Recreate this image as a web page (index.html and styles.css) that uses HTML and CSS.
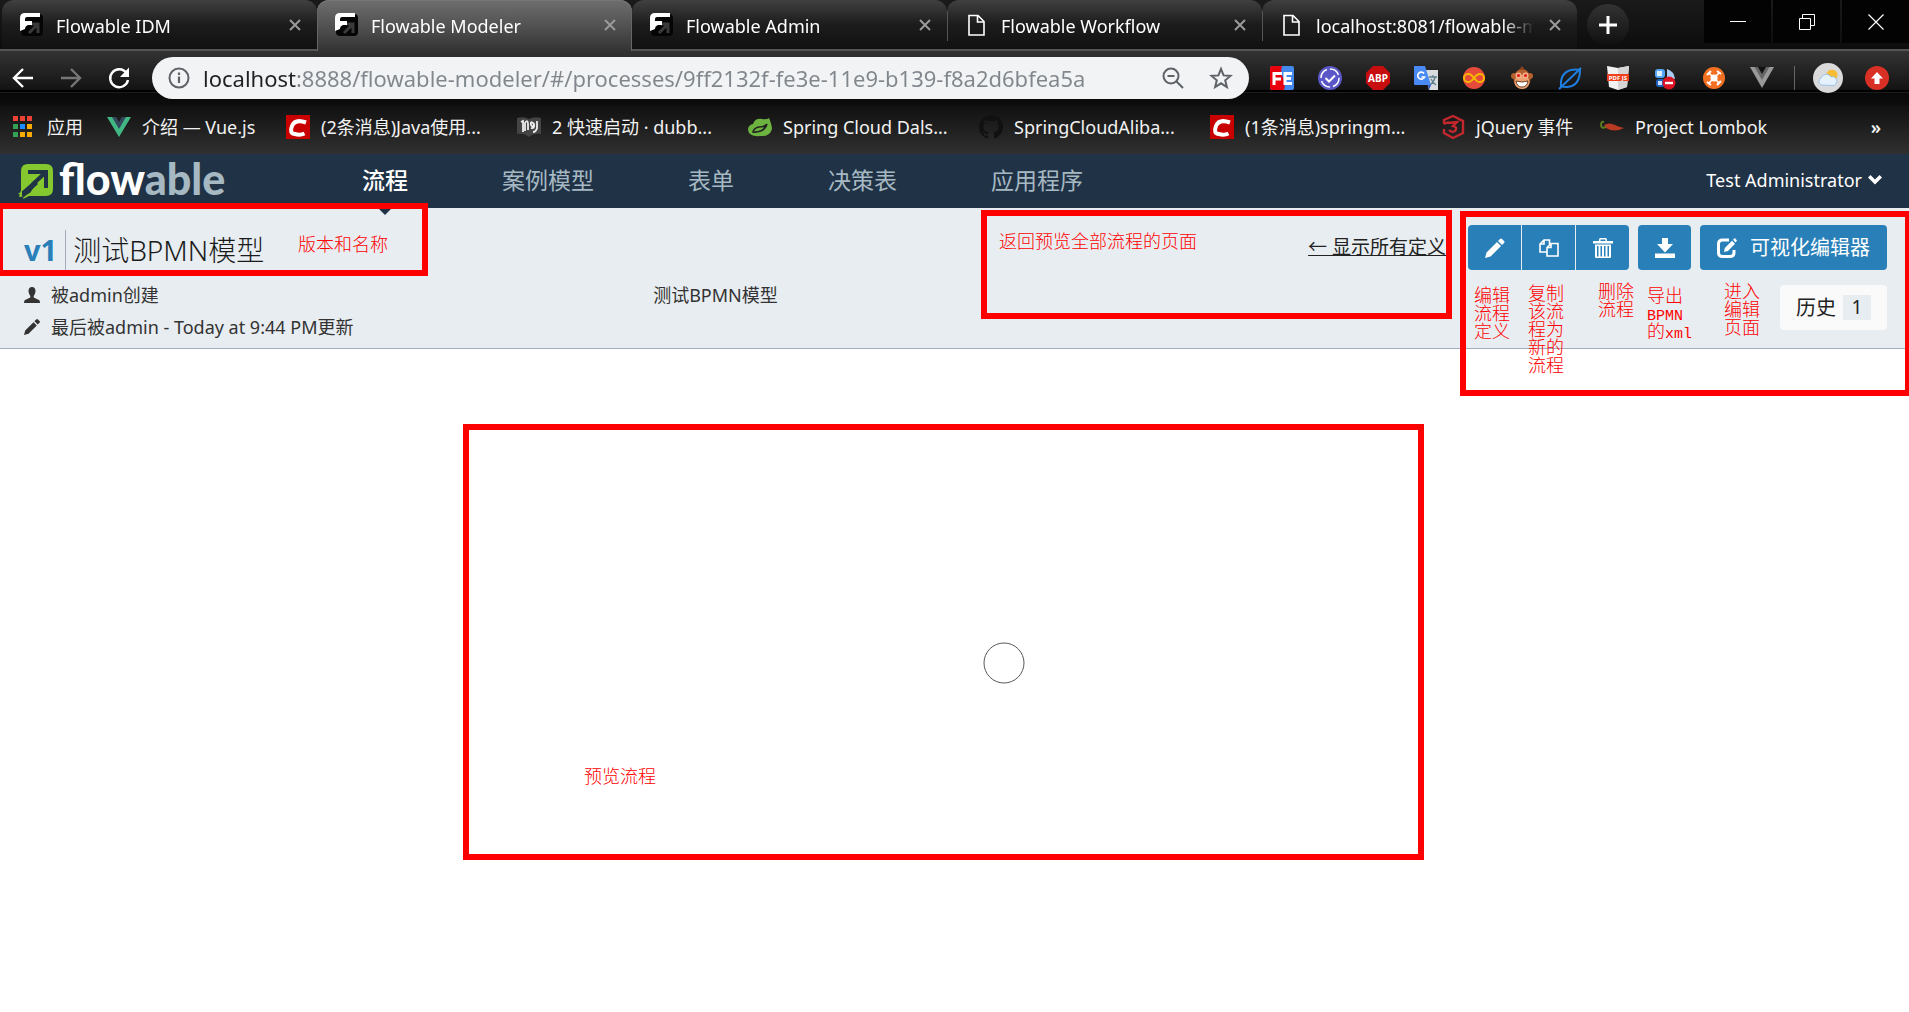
FILE: index.html
```html
<!DOCTYPE html>
<html lang="zh-CN">
<head>
<meta charset="utf-8">
<meta name="viewport" content="width=device-width, initial-scale=1">
<title>Flowable Modeler</title>
<link rel="stylesheet" href="styles.css">
</head>
<body>
<svg class="sprite" aria-hidden="true">
  <symbol id="i-favicon" viewBox="0 0 24 24"><rect x="1" y="1" width="22" height="22" rx="4" fill="#050505"/><path d="M9 20 17 12M11 11h7v9" fill="none" stroke="#3a3a3a" stroke-width="3"/><path d="M0 18V5q0-5 5-5h15v4H7q-2 0-2 2v2h7v4H8Q5 13 5 16z" fill="#fff"/></symbol>
  <symbol id="i-close" viewBox="0 0 14 14"><path d="M2 2l10 10M12 2 2 12" stroke="#9a9a9a" stroke-width="2"/></symbol>
  <symbol id="i-file" viewBox="0 0 24 24"><path d="M4 2.500h9l6 6V22H4zM12.500 3v6H19" fill="none" stroke="#fff" stroke-width="1.600"/></symbol>
  <symbol id="i-csdn" viewBox="0 0 24 24"><path d="M0 0h24v24H0z" fill="#c90000"/><path d="M20 7.500Q9 3.500 6 11t3 8q5 1.500 9.500-.5" fill="none" stroke="#fff" stroke-width="4"/></symbol>
</svg>

<header class="chrome">
  <div class="tabstrip">
    <div class="tab">
      <svg class="tab__icon"><use href="#i-favicon"/></svg><span class="tab__title">Flowable IDM</span>
      <button class="tab__close" aria-label="关闭"><svg><use href="#i-close"/></svg></button>
    </div>
    <div class="tab tab--active">
      <svg class="tab__icon"><use href="#i-favicon"/></svg><span class="tab__title">Flowable Modeler</span>
      <button class="tab__close" aria-label="关闭"><svg><use href="#i-close"/></svg></button>
    </div>
    <div class="tab">
      <svg class="tab__icon"><use href="#i-favicon"/></svg><span class="tab__title">Flowable Admin</span>
      <button class="tab__close" aria-label="关闭"><svg><use href="#i-close"/></svg></button>
    </div>
    <div class="tab tab--divided">
      <svg class="tab__icon"><use href="#i-file"/></svg><span class="tab__title">Flowable Workflow</span>
      <button class="tab__close" aria-label="关闭"><svg><use href="#i-close"/></svg></button>
    </div>
    <div class="tab tab--divided">
      <svg class="tab__icon"><use href="#i-file"/></svg><span class="tab__title">localhost:8081/flowable-modeler</span>
      <button class="tab__close" aria-label="关闭"><svg><use href="#i-close"/></svg></button>
    </div>
    <button class="newtab" aria-label="新标签页"><svg viewBox="0 0 18 18"><path d="M9 0v18M0 9h18" stroke="#fff" stroke-width="3"/></svg></button>
    <div class="winbuttons">
      <button aria-label="最小化"><svg viewBox="0 0 16 16"><path d="M0 7.500h16" stroke="#fff"/></svg></button>
      <button aria-label="还原"><svg viewBox="0 0 16 16"><path d="M.5 4.500h11v11H.5zM3.500 4.500v-4h12v11h-4" fill="none" stroke="#fff"/></svg></button>
      <button aria-label="关闭窗口"><svg viewBox="0 0 16 16"><path d="M.5.5l15 15M15.500.5l-15 15" stroke="#fff" stroke-width="1.200"/></svg></button>
    </div>
  </div>

  <div class="toolbar">
    <div class="toolbar__nav">
      <button aria-label="后退"><svg viewBox="0 0 24 24"><path d="M22 12H4M12 3l-9 9 9 9" fill="none" stroke="#fff" stroke-width="2.400"/></svg></button>
      <button aria-label="前进"><svg viewBox="0 0 24 24"><path d="M2 12h18M12 3l9 9-9 9" fill="none" stroke="#777" stroke-width="2.400"/></svg></button>
      <button aria-label="重新加载"><svg viewBox="0 0 24 24"><path d="M19.500 7A9 9 0 1 0 21 14" fill="none" stroke="#fff" stroke-width="2.400"/><path d="M22 1.500V11h-9z" fill="#fff"/></svg></button>
    </div>
    <div class="omnibox">
      <svg viewBox="0 0 24 24" class="omnibox__icon"><circle cx="12" cy="12" r="9.500" fill="none" stroke="#5f6368" stroke-width="2"/><path d="M12 10.500V17M12 6.500V9" stroke="#5f6368" stroke-width="2.200"/></svg>
      <input class="omnibox__url" type="text" aria-label="地址" value="localhost:8888/flowable-modeler/#/processes/9ff2132f-fe3e-11e9-b139-f8a2d6bfea5a">
      <button aria-label="缩放"><svg viewBox="0 0 24 24"><circle cx="10" cy="10" r="7.500" fill="none" stroke="#5f6368" stroke-width="2"/><path d="M15 15l7 7M6.500 10h7" stroke="#5f6368" stroke-width="2"/></svg></button>
      <button aria-label="收藏"><svg viewBox="0 0 24 24"><path d="M12 3l2.600 6.400 6.900.5-5.300 4.400 1.700 6.700L12 17.300 6.100 21l1.700-6.700L2.500 9.900l6.900-.5z" fill="none" stroke="#5f6368" stroke-width="2"/></svg></button>
    </div>
    <div class="extensions">
      <button aria-label="FE助手"><svg viewBox="0 0 24 24"><rect width="24" height="24" rx="2" fill="#4489ee"/><path d="M2 0h10q-2 6 1 12t1 12H2q-2 0-2-2V2q0-2 2-2z" fill="#e8000c"/><path d="M4 19V7.500h8M4 13h7M22 7.500h-7v10h7M15 12.500h6" fill="none" stroke="#fff" stroke-width="3"/></svg></button>
      <button aria-label="任务"><svg viewBox="0 0 24 24"><circle cx="12" cy="12" r="12" fill="#5b57c8"/><circle cx="12" cy="12" r="9" fill="none" stroke="#fff" stroke-width="1.500" stroke-dasharray="11 3"/><path d="M7.500 12l3.500 3.500 6-6" fill="none" stroke="#fff" stroke-width="2"/></svg></button>
      <button aria-label="Adblock Plus"><svg viewBox="0 0 24 24"><path d="M7 0h10l7 7v10l-7 7H7l-7-7V7z" fill="#c70d0d"/><text x="12" y="16" class="abp">ABP</text></svg></button>
      <button aria-label="翻译"><svg viewBox="0 0 24 24"><path d="M10 4h14v20h-9z" fill="#d9dcdf"/><path d="M15 11h8M19 9v2M16 19q4-3 5-8M17 13q2 4 5 6" stroke="#607d8b" stroke-width="1.300" fill="none"/><path d="M0 0h11l6 19H1q-1 0-1-1z" fill="#4a8af4"/><path d="M14 19h3l-2 5z" fill="#2a56c6"/><path d="M10 7.500A3.500 3.500 0 1 0 10.500 11H7.500" fill="none" stroke="#fff" stroke-width="1.700"/></svg></button>
      <button aria-label="Infinity"><svg viewBox="0 0 24 24"><circle cx="12" cy="12" r="11" fill="#e64a3b"/><path d="M12 12q-3.500-4.500-6-4a4 4 0 0 0 0 8q2.500.5 6-4t6-4a4 4 0 0 1 0 8q-2.500.5-6-4z" fill="none" stroke="#f5b800" stroke-width="2"/></svg></button>
      <button aria-label="Tampermonkey"><svg viewBox="0 0 24 24"><circle cx="4" cy="10" r="3" fill="#b5602f"/><circle cx="20" cy="10" r="3" fill="#b5602f"/><ellipse cx="12" cy="13" rx="8.500" ry="10" fill="#b5602f"/><path d="M9 4l3-4 3 4" fill="#8d4520"/><ellipse cx="12" cy="16" rx="7.500" ry="7" fill="#eba272"/><circle cx="8.500" cy="9.500" r="3" fill="#f1b28a"/><circle cx="15.500" cy="9.500" r="3" fill="#f1b28a"/><circle cx="8.500" cy="9.500" r="1.600" fill="#e01c1c"/><circle cx="15.500" cy="9.500" r="1.600" fill="#e01c1c"/><path d="M6 15q6 2 12 0-1 6-6 6t-6-6z" fill="#fff" stroke="#4a2410" stroke-width=".8"/></svg></button>
      <button aria-label="羽毛"><svg viewBox="0 0 24 24"><path d="M1 23L23 2M3 20q-1-13 10-16 5-1 9 0 0 16-13 17-4 0-6-1z" fill="none" stroke="#1e7fe0" stroke-width="2"/></svg></button>
      <button aria-label="PDF.js"><svg viewBox="0 0 24 24"><path d="M1 0l11 2L23 0l-2 21-9 3-9-3z" fill="#f2f2f2"/><path d="M12 2l11-2-2 21-9 3z" fill="#d5d5d5"/><path d="M1 8h22v7H1z" fill="#f0401e"/><text x="12" y="14" class="pdf">PDF JS</text></svg></button>
      <button aria-label="屏蔽"><svg viewBox="0 0 24 24"><rect x="1" y="3" width="10" height="9" rx="3" fill="#55a5f5"/><rect x="3" y="5" width="5" height="5" fill="#d9efff"/><path d="M13 3q7 2 8 10h-8z" fill="#a9cdf3"/><rect x="2" y="13" width="9" height="8" rx="3" fill="#2161bd"/><rect x="4" y="15" width="4" height="4" fill="#c9e2ff"/><circle cx="15" cy="17" r="6.500" fill="#dc1322"/><path d="M11 17h8" stroke="#fff" stroke-width="2.400"/></svg></button>
      <button aria-label="Postman"><svg viewBox="0 0 24 24"><circle cx="12" cy="12" r="11" fill="#f36f21"/><circle cx="12" cy="12" r="3.600" fill="#fff"/><path d="M12 12L7 7M12 12l5-5M12 12l-5 5M12 12l5 5" stroke="#fff" stroke-width="1.600"/><path d="M5 9l4-4M15 5l4 3M5 16l4 3M15 19l4-4" stroke="#fff" stroke-width="2"/></svg></button>
      <button aria-label="Vue devtools"><svg viewBox="0 0 24 24"><path d="M0 1h24L12 22z" fill="#999"/><path d="M4.500 1h15L12 14z" fill="#666"/><path d="M8 1h8l-4 7z" fill="#111"/></svg></button>
      <span class="extensions__sep"></span>
      <button class="extensions__avatar" aria-label="账户"><svg viewBox="0 0 30 30"><circle cx="15" cy="15" r="15" fill="#dadada"/><circle cx="19" cy="12" r="5.500" fill="#f7bd35"/><path d="M8 22a4 4 0 0 1 0-7 5.500 5.500 0 0 1 10-1 4.500 4.500 0 0 1 5 7q-1 2-4 1.500z" fill="#e5f1fd" stroke="#9fc3ea"/></svg></button>
      <button aria-label="更新"><svg viewBox="0 0 24 24"><circle cx="12" cy="12" r="12" fill="#d93025"/><path d="M12 6l6 6.500h-3.500V18h-5v-5.500H6z" fill="#fff"/></svg></button>
    </div>
  </div>

  <nav class="bookmarks" aria-label="书签">
    <a href="#"><svg viewBox="0 0 24 24"><path d="M1 1h5v5H1zM8 1h5v5H8zM15 1h5v5h-5z" fill="#ea4335"/><path d="M1 9h5v5H1zM1 17h5v5H1z" fill="#34a053"/><path d="M8 9h5v5H8z" fill="#1a8cff"/><path d="M15 9h5v5h-5zM8 17h5v5H8zM15 17h5v5h-5z" fill="#f9ab00"/></svg><span>应用</span></a>
    <a href="#"><svg viewBox="0 0 24 24"><path d="M0 2h24L12 22z" fill="#41b883"/><path d="M5 2h14l-7 12z" fill="#35495e"/><path d="M9 2h6l-3 5z" fill="#1d1d1d"/></svg><span>介绍 — Vue.js</span></a>
    <a href="#"><svg><use href="#i-csdn"/></svg><span>(2条消息)Java使用...</span></a>
    <a href="#"><svg viewBox="0 0 24 24"><path d="M0 3q7-2 12 1 5-3 12-1v16q-7-1-12 3-5-4-12-3z" fill="#444"/><path d="M4 7l2-1v11M8 16V8q3-4 3 1v6M14 13q4 1 3-4-4-4-3 1 2 3 3 0M20 6v7q-1 4-4 4" fill="none" stroke="#eee" stroke-width="1.800"/></svg><span>2 快速启动 · dubb...</span></a>
    <a href="#"><svg viewBox="0 0 24 24"><path d="M21 3q3 7 3 11-2 8-12 7Q1 22 0 15q0-5 5-6 2-6 9-5 5 1 7-1z" fill="#6db33f"/><path d="M5 17q11 1 14-8-2 3-8 3-5 1-6 5z" fill="none" stroke="#222" stroke-width="1.600"/></svg><span>Spring Cloud Dals...</span></a>
    <a href="#"><svg viewBox="0 0 16 16"><path fill="#111" d="M8 0C3.580 0 0 3.580 0 8c0 3.540 2.290 6.530 5.470 7.590.4.070.55-.17.55-.38 0-.19-.01-.82-.01-1.490-2.010.37-2.530-.49-2.690-.94-.09-.23-.48-.94-.82-1.130-.28-.15-.68-.52-.01-.53.63-.01 1.080.58 1.230.82.72 1.210 1.870.87 2.330.66.07-.52.28-.87.51-1.070-1.780-.2-3.640-.89-3.640-3.950 0-.87.31-1.590.82-2.150-.08-.2-.36-1.020.08-2.120 0 0 .67-.21 2.200.82.64-.18 1.320-.27 2-.27s1.360.09 2 .27c1.530-1.040 2.200-.82 2.200-.82.44 1.100.16 1.920.08 2.120.51.56.82 1.270.82 2.150 0 3.070-1.870 3.750-3.650 3.950.29.25.54.73.54 1.480 0 1.070-.01 1.930-.01 2.200 0 .21.15.46.55.38A8.010 8.010 0 0 0 16 8c0-4.420-3.580-8-8-8z"/></svg><span>SpringCloudAliba...</span></a>
    <a href="#"><svg><use href="#i-csdn"/></svg><span>(1条消息)springm...</span></a>
    <a href="#"><svg viewBox="0 0 24 24"><path d="M3 9V5l9-4 10 5v12l-10 5-9-5v-4M7 8l9-1-4 4q5 1 2 5-3 2-6-1M3 9l5-2" fill="none" stroke="#c1272d" stroke-width="2.400"/></svg><span>jQuery 事件</span></a>
    <a href="#"><svg viewBox="0 0 24 24"><path d="M4 10q5-3 11 0 4 2 9 3-10 5-18 0z" fill="#b93a22"/><path d="M6 12Q1 14 1 10t3-3" fill="none" stroke="#5c7a1e" stroke-width="2"/></svg><span>Project Lombok</span></a>
    <button class="bookmarks__more" aria-label="更多书签">»</button>
  </nav>
</header>

<div class="navbar">
  <a class="brand" href="#">
    <svg viewBox="0 0 36 36"><path d="M3 27V8q0-7 7-7h18q7 0 7 7v18q0 7-7 7H11l-6 3 1-3q-3 1-5 1z" fill="#84c72e"/><path d="M10 9h18v16M28 9L15 21l-4 7-7 4" fill="none" stroke="#203246" stroke-width="4"/><path d="M2 30L17 17l3 4L6 34z" fill="#203246"/><path d="M0 31l4-3v4z" fill="#84c72e"/></svg>
    <span>flow<em>able</em></span>
  </a>
  <nav class="mainnav">
    <a class="is-active" href="#">流程</a>
    <a href="#">案例模型</a>
    <a href="#">表单</a>
    <a href="#">决策表</a>
    <a href="#">应用程序</a>
  </nav>
  <button class="account">Test Administrator <svg viewBox="0 0 14 10"><path d="M0 2.500L2.500 0 7 4.500 11.500 0 14 2.500 7 9.500z" fill="#fff"/></svg></button>
</div>

<section class="subheader">
  <div class="subheader__info">
    <div class="titleline"><strong>v1</strong><h1>测试BPMN模型</h1></div>
    <div class="meta">
      <ul class="meta__list">
        <li><svg viewBox="0 0 16 16"><path d="M8 0c2.500 0 3.500 1.800 3.500 4S10 8.500 9.700 9v1.500L15 13q1 .6 1 3H0q0-2.400 1-3l5.300-2.500V9C6 8.500 4.500 6.200 4.500 4S5.500 0 8 0z"/></svg>被admin创建</li>
        <li><svg viewBox="0 0 16 16"><path d="M0 16l1.200-4.500 8.300-8.300 3.300 3.300-8.300 8.300zM10.400 2.300L12.200.5q.9-.9 1.800 0l1.500 1.500q.9.9 0 1.800l-1.800 1.800z"/></svg>最后被admin - Today at 9:44 PM更新</li>
      </ul>
      <p>测试BPMN模型</p>
    </div>
  </div>
  <a class="back" href="#">← 显示所有定义</a>
  <div class="actions">
    <div class="actions__row">
      <div class="btngroup">
        <button class="btn" aria-label="编辑"><svg viewBox="0 0 20 20"><path d="M0 20l1.500-5.500L12 4l4 4L5.500 18.500zM13 3l2-2q1-1 2 0l2 2q1 1 0 2l-2 2z"/></svg></button>
        <button class="btn" aria-label="复制"><svg viewBox="0 0 20 20"><path d="M7.500 14H1V6l4-4h5.500v4M5 2v4H1M8 18V9.500l4-4h7V18zM12 5.500v4H8" fill="none" stroke="#fff" stroke-width="1.600"/></svg></button>
        <button class="btn" aria-label="删除"><svg viewBox="0 0 20 20"><path d="M0 3h6V1.500Q6 0 7.500 0h5Q14 0 14 1.500V3h6v2.500H0zM7.500 1.500V3h5V1.500zM2 6.500h16V19q0 1-1 1H3q-1 0-1-1zM4 8v10.500h1.500V8zM7.500 8v10.500H9V8zM11 8v10.500h1.500V8zM14.500 8v10.500H16V8z" fill-rule="evenodd"/></svg></button>
      </div>
      <button class="btn" aria-label="导出"><svg viewBox="0 0 20 20"><path d="M7 0h6v6h5l-8 8.500L2 6h5zM0 15.500h20V20H0z"/></svg></button>
      <button class="btn btn--wide"><svg viewBox="0 0 20 20"><path d="M12 2H5.500Q1.500 2 1.500 6v8.500q0 4 4 4H13q4 0 4-4V12" fill="none" stroke="#fff" stroke-width="3"/><path d="M7 14l.8-4L15 2.800l3 3L11 13zM16 1.800L17.800 0 20 2.500l-1.500 2z"/></svg>可视化编辑器</button>
    </div>
    <button class="history">历史 <span>1</span></button>
  </div>
</section>

<main class="canvas">
  <svg class="start-event" viewBox="0 0 42 42" role="img" aria-label="开始事件"><circle cx="21" cy="21" r="20" fill="#fff" stroke="#585858"/></svg>
</main>

<div class="marks">
  <div class="frame frame--title"></div>
  <div class="frame frame--back"></div>
  <div class="frame frame--actions"></div>
  <div class="frame frame--preview"></div>
  <p class="note note--title">版本和名称</p>
  <p class="note note--back">返回预览全部流程的页面</p>
  <p class="note note--edit">编辑<br>流程<br>定义</p>
  <p class="note note--copy">复制<br>该流<br>程为<br>新的<br>流程</p>
  <p class="note note--delete">删除<br>流程</p>
  <p class="note note--export">导出<br><code>BPMN</code><br>的<code>xml</code></p>
  <p class="note note--editor">进入<br>编辑<br>页面</p>
  <p class="note note--preview">预览流程</p>
</div>
</body>
</html>
```

FILE: styles.css
```css
* { box-sizing: border-box; }

body {
  margin: 0;
  position: relative;
  min-height: 100vh;
  overflow-x: hidden;
  background: #fff;
  color: #222;
  font: 18px/24px "Noto Sans", "Noto Sans CJK SC", sans-serif;
}

button {
  display: flex;
  align-items: center;
  justify-content: center;
  padding: 0;
  border: 0;
  background: none;
  color: inherit;
  font: inherit;
}

svg { display: block; flex: none; }
a { color: inherit; text-decoration: none; }
p, h1, ul { margin: 0; padding: 0; }
.sprite { position: absolute; width: 0; height: 0; }

/* Browser window */
.chrome {
  color: #f2f2f2;
  background: #111;
}

.tabstrip {
  display: flex;
  height: 51px;
  padding-left: 2px;
  border-bottom: 2px solid #555;
  background: linear-gradient(#1a1a1a, #0d0d0d);
}

.tab {
  position: relative;
  display: flex;
  align-items: center;
  flex: 0 1 315px;
  min-width: 0;
  padding: 0 15px 0 18px;
  border-radius: 12px 12px 0 0;
  background: linear-gradient(#404040, #1c1c1c 50%, #111);
}

.tab--active {
  margin-bottom: -2px;
  padding-bottom: 2px;
  background: linear-gradient(#6e6e6e, #555 45%, #333);
  box-shadow: inset 0 1px #777, inset 1px 0 #666, inset -1px 0 #666;
}

.tab--divided::before {
  content: "";
  position: absolute;
  left: 0;
  top: 11px;
  width: 1px;
  height: 30px;
  background: #555;
}

.tab__icon { width: 24px; height: 24px; }

.tab__title {
  flex: 1;
  margin: 2px 14px 0 12px;
  overflow: hidden;
  white-space: nowrap;
  color: #fff;
  mask-image: linear-gradient(90deg, #000 calc(100% - 32px), transparent);
}

.tab__close svg { width: 14px; height: 14px; }

.newtab {
  width: 42px;
  height: 42px;
  margin: 4px 0 0 10px;
  border-radius: 50%;
  background: linear-gradient(#333, #0f0f0f);
}

.newtab svg { width: 18px; height: 18px; }

.winbuttons {
  display: flex;
  gap: 2px;
  height: 43px;
  margin-left: auto;
}

.winbuttons button { width: 67px; background: #030303; }
.winbuttons svg { width: 16px; height: 16px; }

.toolbar {
  display: flex;
  align-items: center;
  height: 54px;
  padding-right: 20px;
  background: linear-gradient(#333, #131313 39px, #000 39px, #000 41px, #1c1c1c 41px, #1c1c1c 42px, #090909 42px, #0c0c0c);
}

.toolbar__nav {
  display: flex;
  gap: 24px;
  padding: 0 21px 0 11px;
}

.toolbar svg { width: 24px; height: 24px; }

.omnibox {
  display: flex;
  align-items: center;
  flex: 1;
  gap: 24px;
  height: 42px;
  margin-right: 21px;
  padding: 0 16px 0 15px;
  border-radius: 21px;
  background: #f1f3f4;
}

.omnibox__url {
  flex: 1;
  min-width: 0;
  margin-left: -12px;
  padding: 0;
  border: 0;
  outline: 0;
  color: transparent;
  background: linear-gradient(90deg, #202124 93px, #80868b 93px);
  background-clip: text;
  font: 22px/30px "Noto Sans", sans-serif;
}

.extensions {
  display: flex;
  align-items: center;
  gap: 24px;
}

.extensions__sep {
  width: 1px;
  height: 24px;
  margin: 0 -6px 0 -4px;
  background: #666;
}

.extensions .extensions__avatar { margin-right: -2px; }
.extensions .extensions__avatar svg { width: 30px; height: 30px; }
.abp { fill: #fff; font: bold 10px "Noto Sans", sans-serif; text-anchor: middle; }
.pdf { fill: #fff; font: bold 6px "Noto Sans", sans-serif; text-anchor: middle; }

.bookmarks {
  display: grid;
  grid-template-columns: 95px 179px repeat(5, 231px) 159px 1fr 40px;
  align-items: center;
  height: 49px;
  padding: 0 13px 5px 12px;
  background: linear-gradient(#101010, #303030);
}

.bookmarks a {
  display: flex;
  align-items: center;
  gap: 11px;
  white-space: nowrap;
}

.bookmarks svg { width: 24px; height: 24px; }
.bookmarks__more { font-weight: 600; }

/* Application bar */
.navbar {
  display: flex;
  align-items: center;
  height: 54px;
  padding: 0 27px 0 18px;
  background: #203246;
  color: #fff;
}

.brand {
  display: flex;
  align-items: center;
  gap: 5px;
  width: 344px;
  font: 900 43px/50px Lato, sans-serif;
}

.brand svg { width: 36px; height: 36px; }
.brand span { padding-bottom: 4px; }
.brand em { color: #a6b9c2; font-style: normal; }

.mainnav {
  display: flex;
  gap: 94px;
  color: #a6b9c2;
  font-size: 23px;
  line-height: 52px;
}

.mainnav a { height: 54px; }

.mainnav .is-active {
  position: relative;
  color: #fff;
  font-weight: 500;
}

.mainnav .is-active::after {
  content: "";
  position: absolute;
  top: 54px;
  left: 50%;
  margin-left: -7px;
  border: 7px solid transparent;
  border-top-color: #203246;
  border-bottom: 0;
}

.account {
  gap: 6px;
  margin-left: auto;
  padding-bottom: 2px;
}

.account svg { width: 14px; height: 10px; }

/* Model summary */
.subheader {
  display: flex;
  align-items: flex-start;
  padding: 17px 22px 5px 24px;
  border-bottom: 1px solid #a4adbb;
  background: #e8edf1;
}

.subheader__info { flex: 1; }

.titleline {
  display: flex;
  align-items: center;
  height: 50px;
}

.titleline strong {
  padding-right: 8px;
  border-right: 1px solid #a4adbb;
  color: #2980b9;
  font-size: 29px;
  line-height: 40px;
}

.titleline h1 {
  padding-left: 7px;
  color: #1a1a1a;
  font-size: 28px;
  font-weight: 300;
  line-height: 40px;
}

.meta {
  display: grid;
  grid-template-columns: 49% 1fr;
  padding-top: 4px;
  color: #333;
  line-height: 32px;
}

.meta__list { list-style: none; }

.meta__list li {
  display: flex;
  align-items: center;
  gap: 11px;
}

.meta svg { width: 16px; height: 16px; fill: #333; }

.back {
  margin: 10px 22px 0 0;
  font-size: 19px;
  text-decoration: underline;
}

.actions {
  display: flex;
  flex-direction: column;
  align-items: flex-end;
  gap: 15px;
}

.actions__row { display: flex; gap: 9px; }
.btngroup { display: flex; gap: 1px; }

.btn {
  width: 53px;
  height: 45px;
  border-radius: 4px;
  background: #2980b9;
  color: #fff;
  font-size: 20px;
}

.btn svg { width: 20px; height: 20px; fill: #fff; }
.btngroup .btn { border-radius: 0; }
.btngroup .btn:first-child { border-radius: 4px 0 0 4px; }
.btngroup .btn:last-child { border-radius: 0 4px 4px 0; }
.btn--wide { gap: 13px; width: 187px; }

.history {
  gap: 7px;
  height: 45px;
  padding: 0 16px;
  border-radius: 4px;
  background: #fafafa;
  font-size: 20px;
}

.history span {
  width: 28px;
  background: #e8edf1;
  font-size: 19px;
  line-height: 25px;
}

/* Diagram */
.canvas { position: relative; }

.start-event {
  position: absolute;
  top: 293px;
  left: calc(50% + 28px);
  width: 42px;
  height: 42px;
}

/* Review marks laid over the page */
.marks {
  position: absolute;
  inset: 0;
  overflow: hidden;
  pointer-events: none;
}

.frame { position: absolute; border: 6px solid #f00; }
.frame--title { left: -3px; top: 203px; width: 431px; height: 73px; }
.frame--back { right: 457px; top: 210px; width: 471px; height: 109px; }
.frame--actions { right: -2px; top: 211px; width: 451px; height: 185px; }
.frame--preview { left: 463px; right: 485px; top: 424px; height: 436px; }

.note {
  position: absolute;
  color: #f00;
  font: 300 18px/18px "Noto Sans CJK SC", sans-serif;
  white-space: nowrap;
}

.note code { font: 15px/1px "Liberation Mono", monospace; }
.note--title { left: 298px; top: 234px; }
.note--back { right: 712px; top: 231px; }
.note--edit { right: 399px; top: 285px; }
.note--copy { right: 345px; top: 283px; }
.note--delete { right: 275px; top: 281px; }
.note--export { right: 217px; top: 285px; }
.note--editor { right: 149px; top: 281px; }
.note--preview { left: 584px; top: 766px; }
```
